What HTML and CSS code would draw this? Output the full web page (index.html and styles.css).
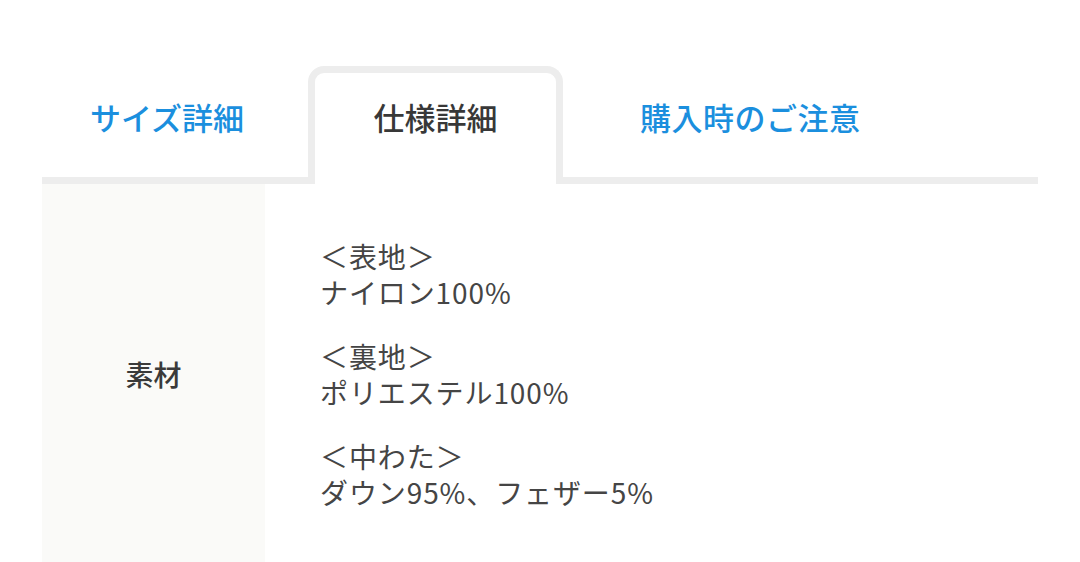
FILE: index.html
```html
<!DOCTYPE html>
<html lang="ja">
<head>
<meta charset="utf-8">
<link rel="stylesheet" href="styles.css">
</head>
<body>
<div class="page">
  <div class="tabs">
    <div class="tab tab-size">サイズ詳細</div>
    <div class="tab tab-active">仕様詳細</div>
    <div class="tab tab-note">購入時のご注意</div>
  </div>
  <div class="spec-row">
    <div class="spec-label">素材</div>
    <div class="spec-body">
      <p class="spec-group">＜表地＞<br>ナイロン100%</p>
      <p class="spec-group">＜裏地＞<br>ポリエステル100%</p>
      <p class="spec-group">＜中わた＞<br>ダウン95%、フェザー5%</p>
    </div>
  </div>
</div>
</body>
</html>
```
FILE: styles.css
```css
html, body {
  margin: 0;
  padding: 0;
  background: #ffffff;
}
body {
  font-family: "Noto Sans CJK JP", "Noto Sans", sans-serif;
  color: #444444;
}
.page {
  width: 996px;
  margin-left: 42px;
  padding-top: 66px;
}
.tabs {
  display: grid;
  grid-template-columns: 266px 255px 1fr;
  align-items: end;
  border-bottom: 7px solid #ededed;
}
.tab {
  font-size: 31px;
  font-weight: 500;
  line-height: 40px;
  color: #1b8fde;
  padding-top: 24px;
  padding-bottom: 40px;
}
.tab-size {
  padding-left: 48px;
}
.tab-note {
  padding-left: 77px;
  letter-spacing: 0.5px;
}
.tab-active {
  position: relative;
  color: #383838;
  text-align: center;
  background: #ffffff;
  border: 7px solid #ededed;
  border-bottom: none;
  border-radius: 16px 16px 0 0;
  padding-top: 24px;
  padding-bottom: 47px;
  margin-bottom: -7px;
}
.spec-row {
  display: flex;
}
.spec-label {
  width: 223px;
  flex: none;
  background: #fafaf8;
  display: flex;
  align-items: center;
  justify-content: center;
  font-size: 28px;
  font-weight: 500;
  color: #3a3a3a;
}
.spec-body {
  padding: 54px 0 54px 55px;
  font-size: 28px;
  line-height: 36px;
  letter-spacing: 0.9px;
  color: #454545;
}
.spec-group {
  margin: 0 0 28px 0;
}
.spec-group:last-child {
  margin-bottom: 0;
}
```
